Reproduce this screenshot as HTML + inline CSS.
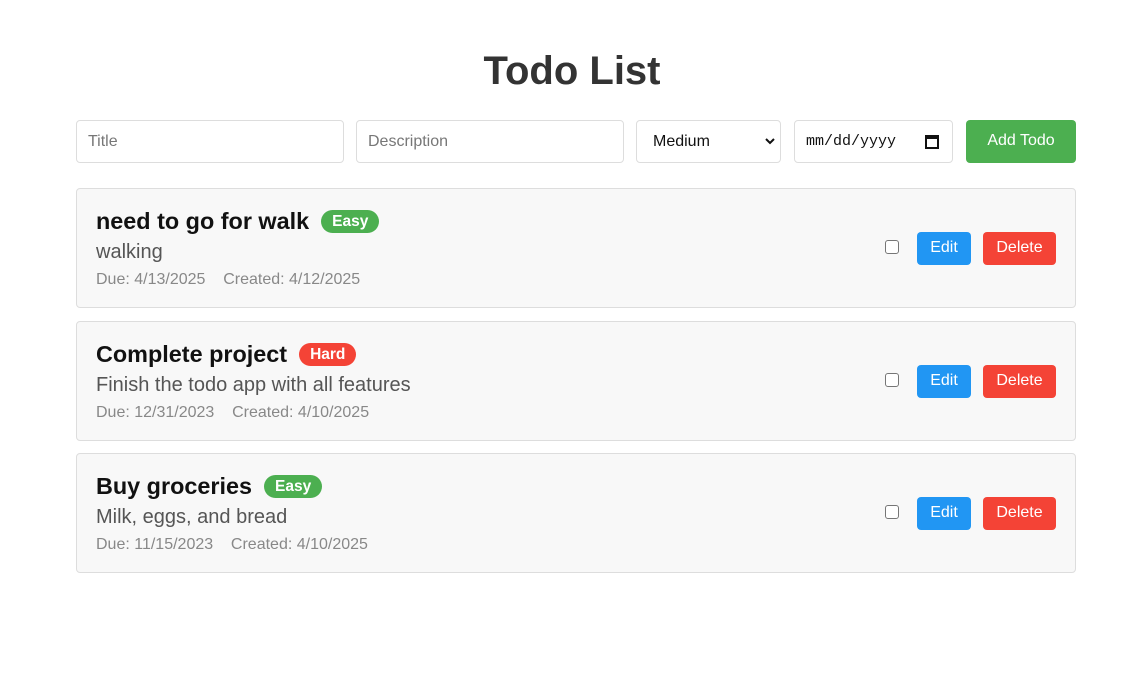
<!DOCTYPE html>
<html><head><style>
*{box-sizing:border-box;margin:0;padding:0}
body{width:1144px;height:681px;background:#fff;font-family:"Liberation Sans",Arial,sans-serif;position:relative;overflow:hidden}
h1{position:absolute;top:47px;left:0;width:1144px;text-align:center;font-size:40px;font-weight:bold;color:#333;line-height:48px}
.in{position:absolute;top:120px;height:43px;border:1px solid #ddd;border-radius:4px;background:#fff;font-size:16px;line-height:41px;padding-left:11px;color:#777}
.btn{position:absolute;border-radius:4px;color:#fff;font-size:16px;text-align:center}
.card{position:absolute;left:76px;width:1000px;height:120px;border:1px solid #ddd;border-radius:4px;background:#f8f8f8}
.t{position:absolute;left:19px;top:19px;font-size:23.4px;font-weight:bold;color:#111;line-height:27px;white-space:nowrap}
.b{display:inline-block;vertical-align:3px;margin-left:12px;padding:0 11px;height:23px;line-height:23px;border-radius:12px;font-size:15.5px;color:#fff}
.d{position:absolute;left:19px;top:51px;font-size:20px;color:#555;line-height:24px}
.m{position:absolute;left:19px;top:81px;font-size:16px;color:#888;line-height:20px;white-space:pre}
.cb{position:absolute;left:808px;top:51px;width:14px;height:14px;border:1px solid #767676;border-radius:3px;background:#fff}
.e{left:840px;top:43px;width:54px;height:33px;line-height:31px;background:#2196f3}
.x{left:906px;top:43px;width:73px;height:33px;line-height:31px;background:#f44336}
</style></head><body>
<h1>Todo List</h1>
<div class="in" style="left:76px;width:268px">Title</div>
<div class="in" style="left:356px;width:268px">Description</div>
<div class="in" style="left:636px;width:145px;color:#111;padding-left:16px">Medium
<svg style="position:absolute;right:4px;top:16px" width="12" height="8" viewBox="0 0 12 8"><path d="M2 2l4 4 4-4" stroke="#111" stroke-width="2" fill="none"/></svg></div>
<div class="in" style="left:794px;width:159px;color:#111;font-family:'Liberation Mono',monospace;font-size:15px;padding-left:11px">mm/dd/yyyy
<svg style="position:absolute;right:13px;top:13px" width="14" height="15" viewBox="0 0 14 15"><rect x="1" y="2" width="12" height="12" stroke="#111" stroke-width="2" fill="none"/><rect x="1" y="2" width="12" height="3" fill="#111"/></svg></div>
<div class="btn" style="left:966px;top:120px;width:110px;height:43px;line-height:41px;background:#4caf50">Add Todo</div>

<div class="card" style="top:188px">
<div class="t">need to go for walk<span class="b" style="background:#4caf50">Easy</span></div>
<div class="d">walking</div>
<div class="m">Due: 4/13/2025    Created: 4/12/2025</div>
<div class="cb"></div><div class="btn e">Edit</div><div class="btn x">Delete</div>
</div>
<div class="card" style="top:321px">
<div class="t">Complete project<span class="b" style="background:#f44336">Hard</span></div>
<div class="d">Finish the todo app with all features</div>
<div class="m">Due: 12/31/2023    Created: 4/10/2025</div>
<div class="cb"></div><div class="btn e">Edit</div><div class="btn x">Delete</div>
</div>
<div class="card" style="top:453px">
<div class="t">Buy groceries<span class="b" style="background:#4caf50">Easy</span></div>
<div class="d">Milk, eggs, and bread</div>
<div class="m">Due: 11/15/2023    Created: 4/10/2025</div>
<div class="cb"></div><div class="btn e">Edit</div><div class="btn x">Delete</div>
</div>
</body></html>
